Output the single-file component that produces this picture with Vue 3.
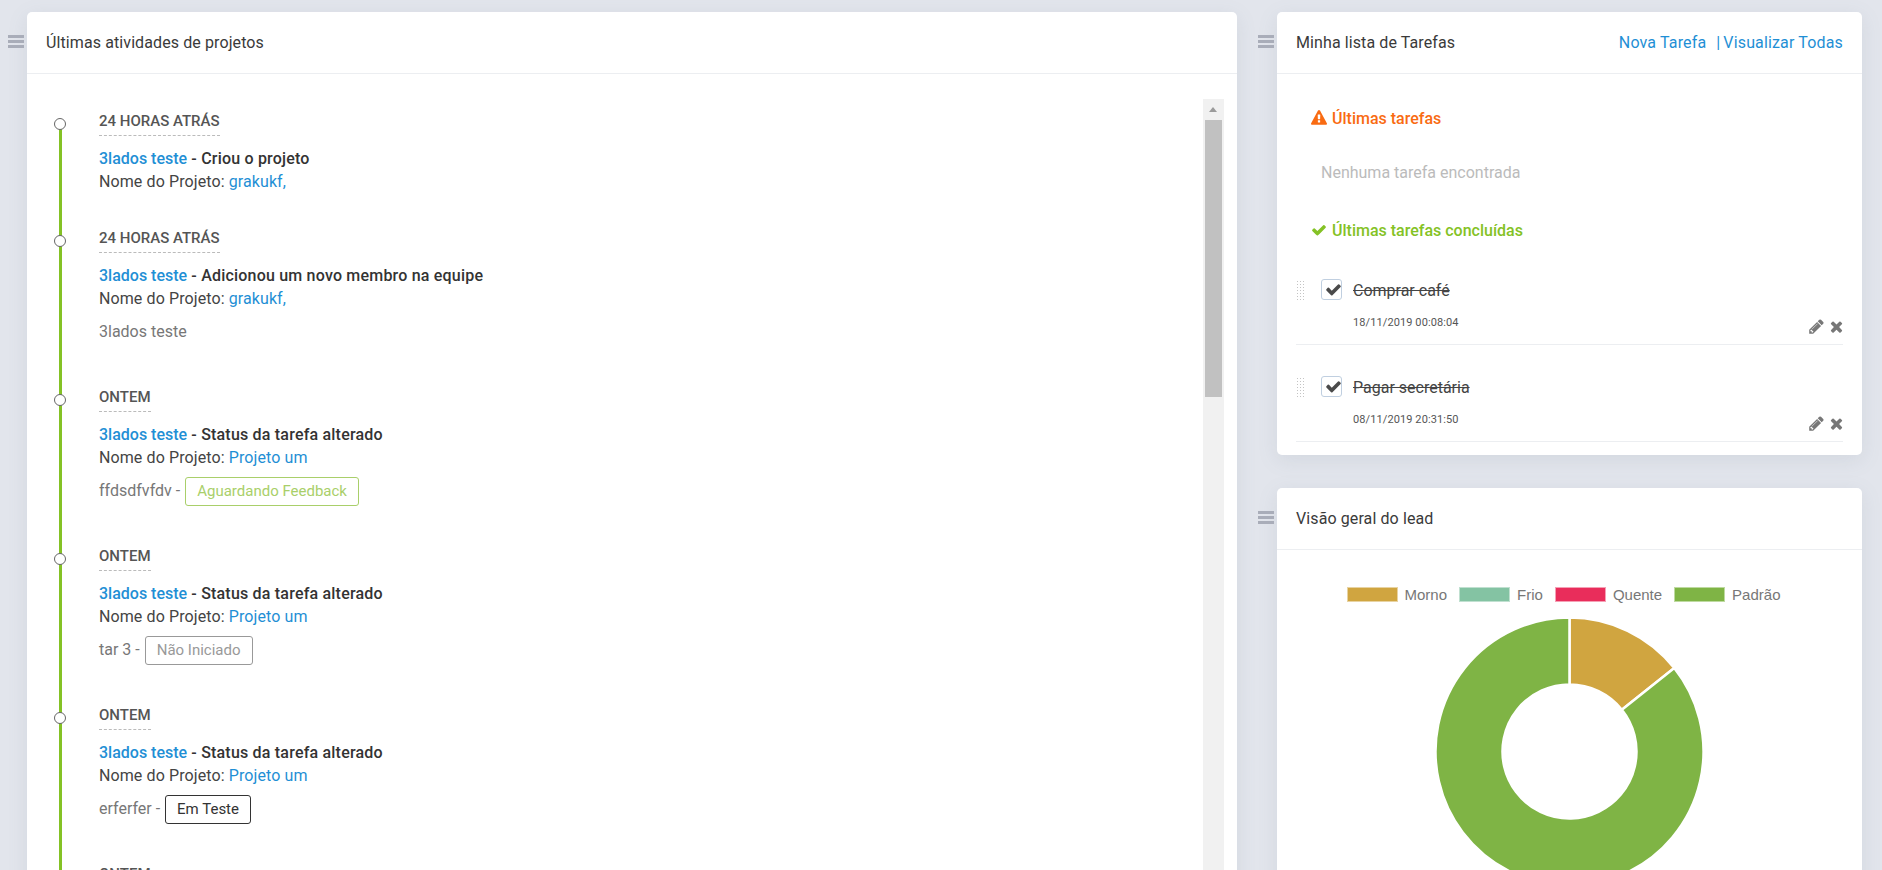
<script setup>
import { computed } from 'vue'

const items = [
  { date: '24 HORAS ATRÁS', action: 'Criou o projeto', project: 'grakukf,' },
  { date: '24 HORAS ATRÁS', action: 'Adicionou um novo membro na equipe', project: 'grakukf,', desc: '3lados teste' },
  { date: 'ONTEM', action: 'Status da tarefa alterado', project: 'Projeto um', desc: 'ffdsdfvfdv -', badge: 'Aguardando Feedback', kind: 'green' },
  { date: 'ONTEM', action: 'Status da tarefa alterado', project: 'Projeto um', desc: 'tar 3 -', badge: 'Não Iniciado', kind: 'gray' },
  { date: 'ONTEM', action: 'Status da tarefa alterado', project: 'Projeto um', desc: 'erferfer -', badge: 'Em Teste', kind: 'dark' },
  { date: 'ONTEM', action: 'Status da tarefa alterado', project: 'Projeto um', desc: 'erferfer -', badge: 'Em Teste', kind: 'dark' }
]

const tasks = [
  { name: 'Comprar café', date: '18/11/2019 00:08:04' },
  { name: 'Pagar secretária', date: '08/11/2019 20:31:50' }
]

const legend = [
  { label: 'Morno', color: '#d0a540', border: '#e8d3a2' },
  { label: 'Frio', color: '#84c3a3', border: '#c0e0d0' },
  { label: 'Quente', color: '#e92d5b', border: '#f5a0b5' },
  { label: 'Padrão', color: '#7fb445', border: '#bedaa0' }
]

const icons = {
  check: 'M1671 566q0 40-28 68l-724 724-136 136q-28 28-68 28t-68-28l-136-136-362-362q-28-28-28-68t28-68l136-136q28-28 68-28t68 28l294 295 656-657q28-28 68-28t68 28l136 136q28 28 28 68z',
  times: 'M1490 1322q0 40-28 68l-136 136q-28 28-68 28t-68-28l-294-294-294 294q-28 28-68 28t-68-28l-136-136q-28-28-28-68t28-68l294-294-294-294q-28-28-28-68t28-68l136-136q28-28 68-28t68 28l294 294 294-294q28-28 68-28t68 28l136 136q28 28 28 68t-28 68l-294 294 294 294q28 28 28 68z',
  warning: 'M1024 1375v-190q0-14-9.5-23.5t-22.5-9.5h-192q-13 0-22.5 9.5t-9.5 23.5v190q0 14 9.5 23.5t22.5 9.5h192q13 0 22.5-9.5t9.5-23.5zm-2-374l18-459q0-12-10-19-13-11-24-11h-220q-11 0-24 11-10 7-10 21l17 457q0 10 10 16.5t24 6.5h185q14 0 23.5-6.5t10.5-16.5zm-14-934l768 1408q35 63-2 126-17 29-46.5 46t-63.5 17h-1536q-34 0-63.5-17t-46.5-46q-37-63-2-126l768-1408q17-31 47-49t65-18 65 18 47 49z',
  pencil: 'M491 1536l91-91-235-235-91 91v107h128v128h107zm523-928q0-22-22-22-10 0-17 7l-542 542q-7 7-7 17 0 22 22 22 10 0 17-7l542-542q7-7 7-17zm-54-192l416 416-832 832h-416v-416zm683 96q0 53-37 90l-166 166-416-416 166-165q36-38 90-38 53 0 91 38l235 234q37 39 37 91z'
}

function slice(from, to, ro, ri) {
  const p = (a, r) => `${(r * Math.sin(a)).toFixed(2)} ${(-r * Math.cos(a)).toFixed(2)}`
  const large = to - from > Math.PI ? 1 : 0
  return `M${p(from, ro)}A${ro} ${ro} 0 ${large} 1 ${p(to, ro)}L${p(to, ri)}A${ri} ${ri} 0 ${large} 0 ${p(from, ri)}Z`
}

const split = (2 * Math.PI) / 7
const arcs = computed(() => [
  { d: slice(0, split, 134, 67), color: '#d0a540' },
  { d: slice(split, 2 * Math.PI - 0.0001, 134, 67), color: '#7fb445' }
])
</script>

<template>
  <div class="page">
    <section class="col col-left">
      <div class="handle"><i></i><i></i><i></i></div>
      <div class="card card-full">
        <header class="card-head"><h3 class="title">Últimas atividades de projetos</h3></header>
        <div class="feed">
          <div class="scrollbar">
            <span class="arrow"></span>
            <span class="thumb"></span>
          </div>
          <div class="rail"></div>
          <article v-for="(it, i) in items" :key="i" class="entry">
            <span class="dot"></span>
            <div class="when"><span>{{ it.date }}</span></div>
            <div class="line line-head"><a class="link">3lados teste</a><b> - {{ it.action }}</b></div>
            <div class="line">Nome do Projeto: <a class="link">{{ it.project }}</a></div>
            <div v-if="it.desc" class="desc">
              <span>{{ it.desc }}</span>
              <span v-if="it.badge" class="badge" :class="it.kind">{{ it.badge }}</span>
            </div>
          </article>
        </div>
      </div>
    </section>

    <section class="col col-right">
      <div class="block">
        <div class="handle"><i></i><i></i><i></i></div>
        <div class="card">
          <header class="card-head between">
            <h3 class="title">Minha lista de Tarefas</h3>
            <div class="head-links">
              <a class="link">Nova Tarefa</a>
              <span class="sep">|</span>
              <a class="link">Visualizar Todas</a>
            </div>
          </header>
          <div class="todo">
            <h4 class="todo-head orange">
              <svg class="fa" viewBox="0 0 1792 1792"><path fill="currentColor" :d="icons.warning" /></svg>
              Últimas tarefas
            </h4>
            <p class="empty">Nenhuma tarefa encontrada</p>
            <h4 class="todo-head green">
              <svg class="fa" viewBox="0 0 1792 1792"><path fill="currentColor" :d="icons.check" /></svg>
              Últimas tarefas concluídas
            </h4>
            <div v-for="t in tasks" :key="t.name" class="task">
              <span class="grip"></span>
              <span class="box"><svg viewBox="0 0 1792 1792"><path fill="#4a4a4a" :d="icons.check" /></svg></span>
              <div class="task-body">
                <div class="task-name">{{ t.name }}</div>
                <div class="task-foot">
                  <span class="task-date">{{ t.date }}</span>
                  <span class="task-actions">
                    <svg class="act" viewBox="0 0 1792 1792"><path fill="#777" :d="icons.pencil" /></svg>
                    <svg class="act" viewBox="0 0 1792 1792"><path fill="#777" :d="icons.times" /></svg>
                  </span>
                </div>
              </div>
            </div>
          </div>
        </div>
      </div>

      <div class="block">
        <div class="handle"><i></i><i></i><i></i></div>
        <div class="card card-full">
          <header class="card-head"><h3 class="title">Visão geral do lead</h3></header>
          <div class="chart">
            <div class="legend">
              <div v-for="l in legend" :key="l.label" class="legend-item">
                <span class="swatch" :style="{ background: l.color, borderColor: l.border }"></span>
                <span>{{ l.label }}</span>
              </div>
            </div>
            <svg class="donut" viewBox="-134.5 -134.5 269 269">
              <path v-for="a in arcs" :key="a.color" :d="a.d" :fill="a.color" stroke="#fff" stroke-width="2.5" />
            </svg>
          </div>
        </div>
      </div>
    </section>
  </div>
</template>

<style>
html, body { margin: 0; height: 870px; overflow: hidden; background: #e2e5ec; }
</style>

<style scoped>
* { box-sizing: border-box; }
.page {
  height: 870px;
  overflow: hidden;
  display: grid;
  grid-template-columns: 1210px 585px;
  column-gap: 40px;
  padding: 12px 20px 0 27px;
  background: #e2e5ec;
  font-family: Roboto, sans-serif;
  font-size: 16px;
  color: #333;
}
.col { position: relative; display: flex; flex-direction: column; min-height: 0; }
.col-right { gap: 33px; }
.block { position: relative; }
.block:last-child { flex: 1; }
.handle {
  position: absolute;
  left: -19px;
  top: 23px;
  width: 16px;
  display: flex;
  flex-direction: column;
  gap: 2px;
}
.handle i { display: block; height: 3px; background: #a9adb9; }
.card {
  background: #fff;
  border-radius: 5px;
  box-shadow: 0 5px 20px rgba(110, 120, 140, 0.13);
}
.card-full { height: 1000px; }
.card-head {
  height: 62px;
  border-bottom: 1px solid #eceef1;
  padding: 0 19px;
  display: flex;
  align-items: center;
}
.between { justify-content: space-between; }
.title { margin: 0; font-size: 16px; font-weight: 400; color: #3a3a3a; letter-spacing: 0.1px; }
.link { color: #1f8fd5; text-decoration: none; }
.head-links { font-size: 16px; display: flex; align-items: center; color: #1f8fd5; letter-spacing: 0.15px; }
.sep { margin: 0 3px 0 10px; }

.feed { position: relative; padding: 37px 0 0 72px; }
.scrollbar {
  position: absolute;
  left: 1176px;
  top: 25px;
  width: 21px;
  height: 900px;
  background: #f1f1f1;
}
.arrow {
  position: absolute;
  left: 6px;
  top: 8px;
  border: 4.5px solid transparent;
  border-top: 0;
  border-bottom: 5px solid #9b9b9b;
}
.thumb {
  position: absolute;
  left: 2px;
  top: 21px;
  width: 17px;
  height: 277px;
  background: #c1c1c1;
}
.rail {
  position: absolute;
  left: 32px;
  top: 50px;
  width: 3px;
  height: 900px;
  background: #84c225;
}
.entry { position: relative; padding-bottom: 35px; }
.dot {
  position: absolute;
  left: -45px;
  top: 7px;
  width: 12px;
  height: 12px;
  border-radius: 50%;
  background: #fff;
  border: 1px solid #666;
}
.when { height: 25px; margin-bottom: 11px; font-size: 15px; line-height: 20px; color: #555; font-weight: 500; }
.when span { display: inline-block; height: 25px; border-bottom: 1px dashed #bbb; }
.line { font-size: 16px; line-height: 23px; color: #444; letter-spacing: 0.1px; }
.line b { font-weight: 500; color: #333; letter-spacing: 0.2px; }
.line-head .link { font-weight: 500; letter-spacing: 0; }
.desc { margin: 8px 0 5px; height: 29px; line-height: 27px; color: #777; font-size: 16px; display: flex; align-items: flex-start; gap: 5px; }
.badge {
  display: inline-block;
  height: 29px;
  line-height: 27px;
  padding: 0 11px;
  border: 1px solid;
  border-radius: 3px;
  font-size: 15px;
}
.badge.green { color: #a9cf6a; border-color: #a9cf6a; }
.badge.gray { color: #999; border-color: #999; }
.badge.dark { color: #333; border-color: #333; }

.todo { padding: 34px 19px 13px 19px; }
.todo-head {
  margin: 0 0 0 15px;
  height: 20px;
  display: flex;
  align-items: center;
  gap: 5px;
  font-size: 16px;
  font-weight: 500;
}
.fa { width: 16px; height: 16px; }
.orange { color: #f96b12; }
.green { color: #84c225; }
.empty { margin: 35px 0 37px 25px; height: 20px; line-height: 20px; font-size: 16px; color: #bbb; }
.task {
  display: flex;
  margin-top: 31px;
  height: 66px;
  border-bottom: 1px solid #eceef1;
}
.todo-head + .task { margin-top: 39px; }
.grip {
  width: 10px;
  height: 20px;
  margin-top: 1px;
  background-image: radial-gradient(#c4c4c4 0.8px, transparent 0.9px);
  background-size: 3px 3px;
}
.box {
  width: 21px;
  height: 21px;
  margin-left: 15px;
  border: 1px solid #c0cfe0;
  border-radius: 3px;
  display: flex;
  align-items: center;
  justify-content: center;
  overflow: visible;
}
.box svg { width: 17px; height: 17px; flex: none; margin-left: 3px; }
.task-body { flex: 1; margin-left: 11px; }
.task-name { height: 24px; line-height: 24px; font-size: 16px; color: #444; text-decoration: line-through; }
.task-foot { display: flex; justify-content: space-between; margin-top: 12px; }
.task-date { font-size: 11px; line-height: 16px; color: #555; letter-spacing: 0.1px; }
.task-actions { display: flex; gap: 3px; margin-top: 3px; margin-right: -2px; }
.act { width: 17px; height: 17px; }

.chart { display: flex; flex-direction: column; align-items: center; padding-top: 37px; }
.legend {
  display: flex;
  gap: 12px;
  height: 31px;
  padding-right: 12px;
  font-family: "Liberation Sans", Arial, sans-serif;
  font-size: 15px;
  color: #777;
}
.legend-item { display: flex; align-items: flex-start; gap: 7px; line-height: 16px; }
.swatch { width: 51px; height: 15px; border: 1px solid; }
.donut { width: 269px; height: 269px; flex: none; margin-top: -1px; }
</style>
